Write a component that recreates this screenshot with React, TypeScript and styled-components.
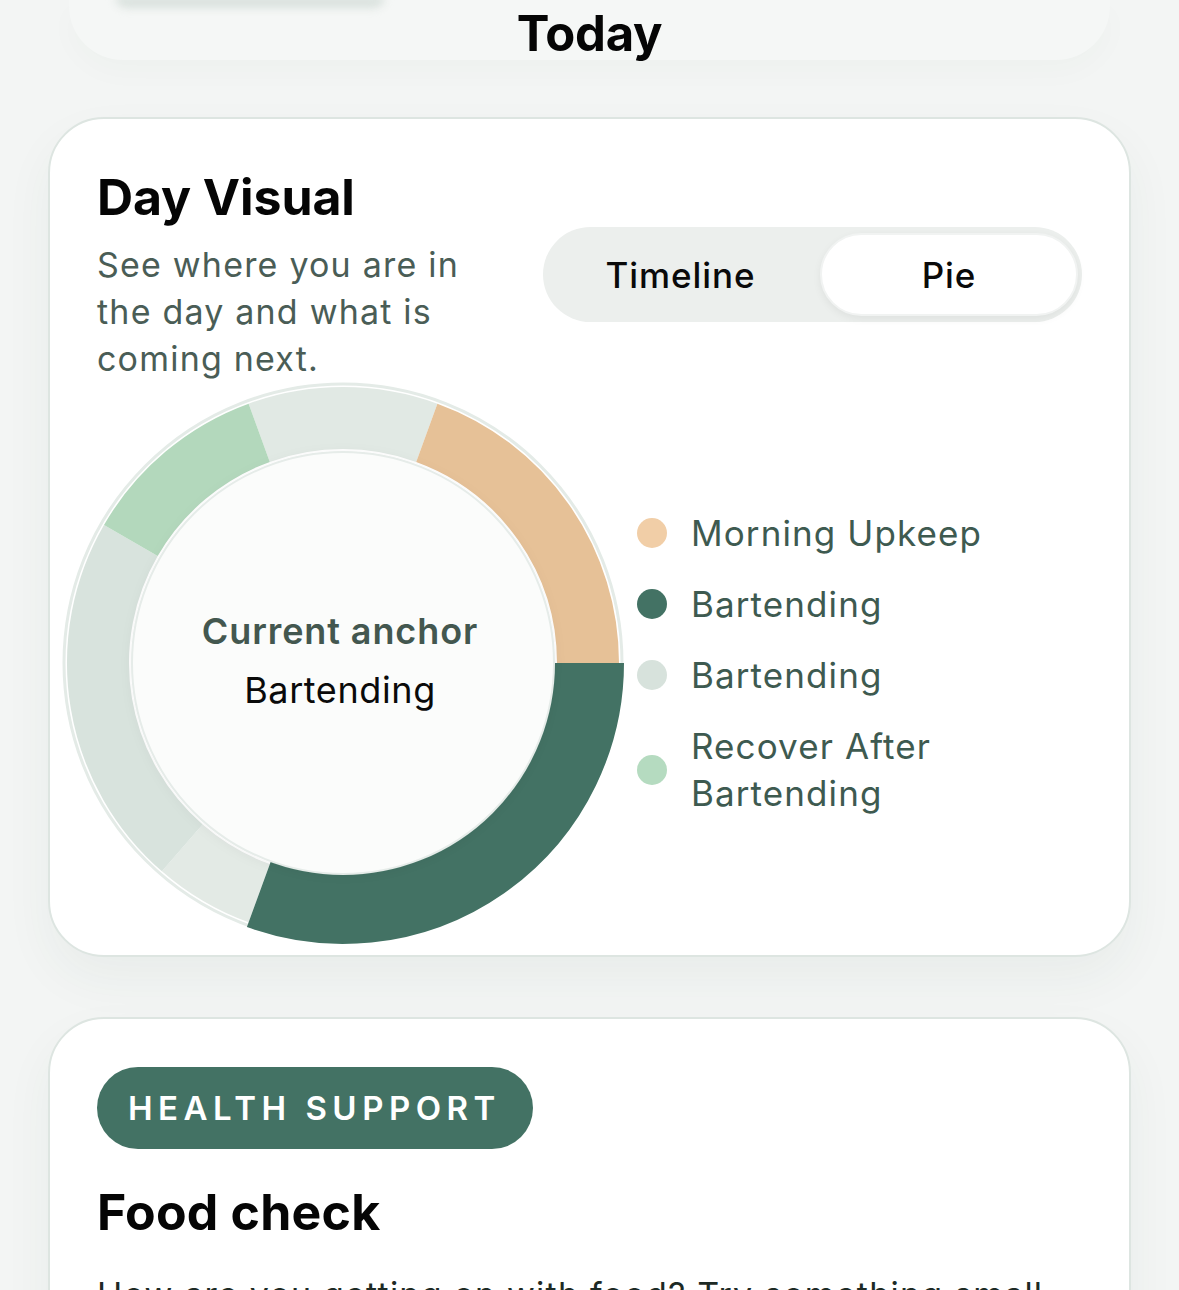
import React from "react";
import styled, { createGlobalStyle } from "styled-components";

interface Segment {
  from: number;
  to: number;
  color: string;
  active?: boolean;
}

interface LegendEntry {
  label: string;
  color: string;
}

const segments: Segment[] = [
  { from: -20, to: 20, color: "#e1e9e4" },
  { from: 20, to: 90, color: "#e6c197" },
  { from: 200, to: 221, color: "#e3eae5" },
  { from: 221, to: 300, color: "#d8e3dd" },
  { from: 300, to: 340, color: "#b3d8bc" },
  { from: 90, to: 200, color: "#437264", active: true },
];

const legend: LegendEntry[] = [
  { label: "Morning Upkeep", color: "#f1cea7" },
  { label: "Bartending", color: "#437264" },
  { label: "Bartending", color: "#d7e2dc" },
  { label: "Recover After Bartending", color: "#b5dbc0" },
];

const SIZE = 580;
const C = SIZE / 2;
const RING_R = 245;

const polar = (r: number, deg: number) => {
  const a = (deg * Math.PI) / 180;
  return [C + r * Math.sin(a), C - r * Math.cos(a)];
};

const arcPath = (from: number, to: number, r: number) => {
  const [x1, y1] = polar(r, from);
  const [x2, y2] = polar(r, to);
  const large = to - from > 180 ? 1 : 0;
  return `M ${x1} ${y1} A ${r} ${r} 0 ${large} 1 ${x2} ${y2}`;
};

const GlobalStyle = createGlobalStyle`
  html, body {
    margin: 0;
    padding: 0;
    background: #f3f5f4;
  }
  body {
    font-family: Inter, "Noto Sans", "Liberation Sans", sans-serif;
    -webkit-font-smoothing: antialiased;
  }
`;

const Page = styled.div`
  width: 1179px;
  height: 1290px;
  overflow: hidden;
  background: #f3f5f4;
  box-sizing: border-box;
  padding: 0 48px;
`;

const Header = styled.header`
  display: grid;
  margin: 0 -48px 53px;
`;

const FrostPanel = styled.div`
  grid-area: 1 / 1;
  margin: 0 69px;
  height: 60px;
  border-radius: 0 0 54px 54px;
  background: #f5f7f6;
  box-shadow: 0 12px 30px rgba(40, 70, 60, 0.025);
`;

const GhostButton = styled.div`
  width: 270px;
  height: 12px;
  margin: -4px 0 0 46px;
  border-radius: 0 0 40px 40px;
  background: #d9e1dd;
  filter: blur(4px);
`;

const PageTitle = styled.h1`
  grid-area: 1 / 1;
  margin: 4px 0 0;
  text-align: center;
  font-size: 49px;
  line-height: 60px;
  font-weight: 700;
  color: #050505;
  letter-spacing: -0.3px;
`;

const Card = styled.section<{ $bottom?: number }>`
  background: #fff;
  border: 2px solid #dde5e1;
  border-radius: 56px;
  padding: 48px 47px ${(p) => p.$bottom ?? 48}px;
  box-shadow: 0 22px 50px rgba(40, 70, 60, 0.05);
  margin-bottom: 60px;
`;

const CardHead = styled.div`
  display: grid;
  grid-template-columns: 1fr 539px;
  column-gap: 20px;
`;

const CardTitle = styled.h2`
  grid-column: 1 / -1;
  margin: 0;
  font-size: 50px;
  line-height: 60px;
  font-weight: 700;
  color: #050505;
  letter-spacing: -0.1px;
`;

const Description = styled.p`
  margin: 14px 0 0;
  max-width: 400px;
  font-size: 34px;
  line-height: 47px;
  color: #4a5d56;
  letter-spacing: 1.2px;
`;

const Segmented = styled.div`
  align-self: start;
  display: grid;
  grid-template-columns: 1fr 258px;
  height: 95px;
  box-sizing: border-box;
  padding: 6px 4px 6px 6px;
  border-radius: 48px;
  background: #ecefed;
`;

const SegmentButton = styled.button<{ $active?: boolean }>`
  border: ${(p) => (p.$active ? "2px solid #f1f3f2" : "none")};
  border-radius: 42px;
  background: ${(p) => (p.$active ? "#fff" : "transparent")};
  box-shadow: ${(p) => (p.$active ? "0 3px 8px rgba(0, 0, 0, 0.06)" : "none")};
  font-family: inherit;
  font-size: 35px;
  font-weight: 500;
  letter-spacing: 0.9px;
  color: #0a0a0a;
  padding: 0 ${(p) => (p.$active ? 0 : 8)}px 0 0;
  cursor: pointer;
`;

const ChartRow = styled.div`
  display: flex;
  align-items: center;
  margin: -9px 0 2px -44px;
`;

const DonutWrap = styled.div`
  position: relative;
  width: ${SIZE}px;
  height: ${SIZE}px;
  flex: none;
`;

const DonutCenter = styled.div`
  position: absolute;
  inset: 0;
  display: flex;
  flex-direction: column;
  align-items: center;
  justify-content: center;
  padding: 0 6px 4px 0;
  box-sizing: border-box;
`;

const AnchorLabel = styled.div`
  font-size: 36px;
  line-height: 59px;
  font-weight: 600;
  color: #43574f;
  letter-spacing: 0.9px;
`;

const AnchorValue = styled.div`
  font-size: 36px;
  line-height: 59px;
  color: #0a0a0a;
  letter-spacing: 0.6px;
`;

const Legend = styled.ul`
  list-style: none;
  margin: 0 0 0 4px;
  padding: 0;
  display: flex;
  flex-direction: column;
  gap: 24px;
`;

const LegendItem = styled.li`
  display: flex;
  align-items: center;
  gap: 24px;
`;

const Dot = styled.span<{ $color: string }>`
  width: 30px;
  height: 30px;
  border-radius: 50%;
  background: ${(p) => p.$color};
  flex: none;
`;

const LegendText = styled.span`
  max-width: 300px;
  font-size: 35px;
  line-height: 47px;
  color: #3e5a50;
  letter-spacing: 1.1px;
`;

const Badge = styled.span`
  display: inline-flex;
  align-items: center;
  height: 82px;
  padding: 0 32px 0 31px;
  border-radius: 41px;
  background: #437264;
  color: #fff;
  font-size: 33px;
  font-weight: 600;
  letter-spacing: 5.5px;
`;

const SectionTitle = styled.h2`
  margin: 33px 0 0;
  font-size: 50px;
  line-height: 60px;
  font-weight: 700;
  color: #050505;
  letter-spacing: 0.2px;
`;

const BodyText = styled.p`
  margin: 29px 0 0;
  font-size: 34px;
  line-height: 47px;
  color: #1d2a25;
  letter-spacing: 1.2px;
`;

const Donut: React.FC = () => (
  <svg width={SIZE} height={SIZE} viewBox={`0 0 ${SIZE} ${SIZE}`}>
    <defs>
      <filter id="disc" x="-20%" y="-20%" width="140%" height="140%">
        <feDropShadow dx="0" dy="2" stdDeviation="6" floodColor="#000" floodOpacity="0.05" />
      </filter>
    </defs>
    <circle cx={C} cy={C} r={279} fill="none" stroke="#e4ebe7" strokeWidth={3} />
    {segments.map((s, i) => (
      <path
        key={i}
        d={arcPath(s.from, s.to, RING_R)}
        fill="none"
        stroke={s.color}
        strokeWidth={s.active ? 72 : 62}
      />
    ))}
    <circle cx={C} cy={C} r={211} fill="#fbfcfb" stroke="#e6ece9" strokeWidth={2} filter="url(#disc)" />
  </svg>
);

const App: React.FC = () => {
  return (
    <>
      <GlobalStyle />
      <Page>
        <Header>
          <FrostPanel>
            <GhostButton />
          </FrostPanel>
          <PageTitle>Today</PageTitle>
        </Header>

        <Card $bottom={0}>
          <CardHead>
            <CardTitle>Day Visual</CardTitle>
            <Description>See where you are in the day and what is coming next.</Description>
            <Segmented>
              <SegmentButton>Timeline</SegmentButton>
              <SegmentButton $active>Pie</SegmentButton>
            </Segmented>
          </CardHead>

          <ChartRow>
            <DonutWrap>
              <Donut />
              <DonutCenter>
                <AnchorLabel>Current anchor</AnchorLabel>
                <AnchorValue>Bartending</AnchorValue>
              </DonutCenter>
            </DonutWrap>
            <Legend>
              {legend.map((l, i) => (
                <LegendItem key={i}>
                  <Dot $color={l.color} />
                  <LegendText>{l.label}</LegendText>
                </LegendItem>
              ))}
            </Legend>
          </ChartRow>
        </Card>

        <Card>
          <Badge>HEALTH SUPPORT</Badge>
          <SectionTitle>Food check</SectionTitle>
          <BodyText>How are you getting on with food? Try something small and easy.</BodyText>
        </Card>
      </Page>
    </>
  );
};

export default App;
